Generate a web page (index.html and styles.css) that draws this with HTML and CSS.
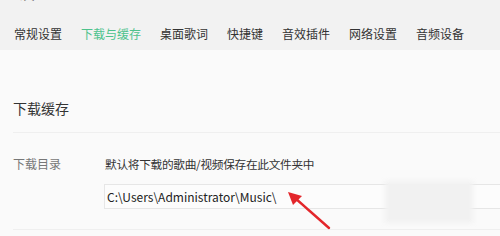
FILE: index.html
```html
<!DOCTYPE html>
<html>
	<head>
		<meta charset="utf-8">
		<title>设置</title>
		<link rel="stylesheet" href="styles.css">
	</head>
	<body>
		<div class="settingsNode">
			<!-- 顶部 -->
			<div class="headNode">
				<div class="titleNode">设置</div>
				<ul class="tabNode">
					<li>常规设置</li>
					<li class="active">下载与缓存</li>
					<li>桌面歌词</li>
					<li>快捷键</li>
					<li>音效插件</li>
					<li>网络设置</li>
					<li>音频设备</li>
				</ul>
			</div>
			<!-- 下载缓存 -->
			<div class="bodyNode">
				<h2 class="sectionTitle">下载缓存</h2>
				<div class="rowNode">
					<div class="rowLabel">下载目录</div>
					<div class="rowMain">
						<p class="rowDesc">默认将下载的歌曲/视频保存在此文件夹中</p>
						<input class="pathInput" type="text" value="C:\Users\Administrator\Music\" readonly>
					</div>
				</div>
			</div>
			<div class="blurNode"></div>
			<svg class="arrowNode" width="60" height="50" viewBox="0 0 60 50">
				<line x1="46" y1="39" x2="12" y2="9" stroke="#e3262b" stroke-width="2.4" stroke-linecap="round"/>
				<polygon points="5,3 19,7 10,16" fill="#e3262b"/>
			</svg>
		</div>
	</body>
</html>
```

FILE: styles.css
```css
* {
	margin: 0;
	padding: 0;
	list-style: none;
}

html,
body {
	width: 500px;
	height: 236px;
	overflow: hidden;
	background: #fafafa;
}

body {
	font-family: "Noto Sans CJK SC", "Microsoft YaHei", sans-serif;
	color: #333333;
}

.settingsNode {
	position: relative;
	width: 500px;
	height: 236px;
	overflow: hidden;
}

.settingsNode .headNode {
	height: 50px;
	background: #f2f2f2;
	overflow: hidden;
}

.settingsNode .headNode .titleNode {
	height: 18px;
	margin: -17px 0 0 18px;
	font-size: 17px;
	line-height: 18px;
	color: #444444;
}

.settingsNode .headNode .tabNode {
	display: flex;
	gap: 19px;
	padding: 0 0 0 14px;
	margin-top: 7px;
}

.settingsNode .headNode .tabNode li {
	font-size: 12px;
	line-height: 16px;
	padding: 18px 0 10px;
	border-bottom: 2px solid transparent;
	color: #333333;
	white-space: nowrap;
	cursor: pointer;
}

.settingsNode .headNode .tabNode li.active {
	color: #4dc28c;
	border-bottom-color: #4dc28c;
}

.settingsNode .bodyNode {
	padding: 0 0 0 13px;
}

.settingsNode .bodyNode .sectionTitle {
	font-size: 14px;
	font-weight: normal;
	line-height: 20px;
	margin-top: 48px;
	padding-bottom: 14px;
	border-bottom: 1px solid #efefef;
	color: #333333;
}

.settingsNode .bodyNode .rowNode {
	display: flex;
	padding: 23px 0 20px;
	border-bottom: 1px solid #efefef;
}

.settingsNode .bodyNode .rowLabel {
	width: 92px;
	flex-shrink: 0;
	font-size: 12px;
	line-height: 16px;
	color: #777777;
}

.settingsNode .bodyNode .rowMain {
	flex: 1;
	min-width: 0;
}

.settingsNode .bodyNode .rowDesc {
	font-size: 11.7px;
	line-height: 16px;
	letter-spacing: -0.3px;
	color: #333333;
}

.settingsNode .bodyNode .pathInput {
	display: block;
	width: 420px;
	height: 23px;
	margin: 12px 0 0 -1px;
	padding: 0 2px;
	border: 1px solid #e6e6e6;
	background: #fcfcfc;
	font-family: "Noto Sans CJK SC", "Microsoft YaHei", sans-serif;
	font-size: 12px;
	color: #222222;
	outline: none;
}

.settingsNode .blurNode {
	position: absolute;
	left: 385px;
	top: 181px;
	width: 88px;
	height: 42px;
	background: #f1f1f1;
	filter: blur(2px);
}

.settingsNode .arrowNode {
	position: absolute;
	left: 283px;
	top: 189px;
}
```
